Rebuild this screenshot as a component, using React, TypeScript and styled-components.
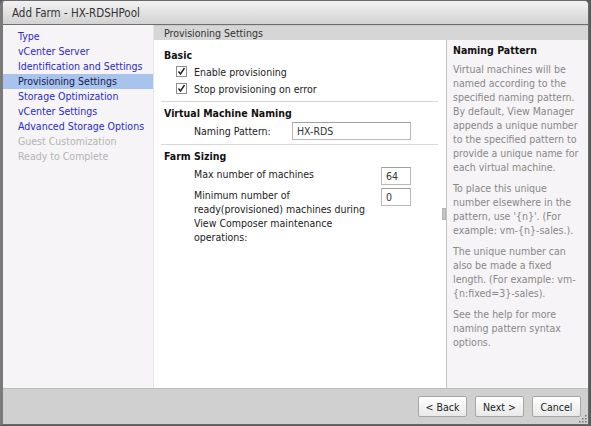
import React from "react";
import styled, { createGlobalStyle } from "styled-components";

const Global = createGlobalStyle`
  html, body { margin: 0; padding: 0; background: #5a5a5a; }
  body { font-family: "DejaVu Sans Condensed", "DejaVu Sans", sans-serif; font-size: 10.5px; }
  * { box-sizing: border-box; }
`;

const Window = styled.div`
  width: 589px;
  height: 425px;
  display: flex;
  flex-direction: column;
  background: #d0d0d0;
  border: 1px solid #6a6a6a;
  border-left: 3px solid #7a7a7a;
  border-radius: 5px 5px 0 0;
  overflow: hidden;
`;

const TitleBar = styled.div`
  height: 24px;
  flex: none;
  display: flex;
  align-items: center;
  padding-left: 9px;
  background: linear-gradient(#f2f2f2, #d2d2d2);
  border-bottom: 1px solid #6e6e6e;
  color: #333;
  font-size: 11.5px;
`;

const Body = styled.div`
  flex: 1;
  display: flex;
  min-height: 0;
`;

const Nav = styled.div`
  width: 151px;
  flex: none;
  background: #f6f4f6;
  padding-top: 4px;
  border-right: 1px solid #e6e6e6;
`;

const NavItem = styled.div<{ $state: "link" | "active" | "disabled" }>`
  height: 15px;
  line-height: 15px;
  padding-left: 15px;
  white-space: nowrap;
  color: ${(p) => (p.$state === "disabled" ? "#b4b4b4" : p.$state === "active" ? "#1a1a50" : "#2b2bc8")};
  background: ${(p) => (p.$state === "active" ? "#a8c3ec" : "transparent")};
`;

const Main = styled.div`
  flex: 1;
  display: flex;
  flex-direction: column;
  min-width: 0;
`;

const PanelHeader = styled.div`
  height: 15px;
  flex: none;
  line-height: 15px;
  padding-left: 10px;
  background: #d6d6d6;
  border-top: 1px solid #cacaca;
  color: #333;
`;

const PanelRow = styled.div`
  flex: 1;
  display: flex;
  min-height: 0;
`;

const Content = styled.div`
  width: 292px;
  flex: none;
  display: flex;
  background: #fff;
`;

const Scroll = styled.div`
  flex: 1;
  padding: 8px 4px 0 7px;
`;

const Track = styled.div`
  width: 4px;
  flex: none;
  padding-top: 168px;
`;

const Thumb = styled.div`
  width: 4px;
  height: 12px;
  background: #c4c4c4;
  border: 1px solid #b4b4b4;
`;

const Section = styled.div<{ $last?: boolean }>`
  border-bottom: ${(p) => (p.$last ? "none" : "1px solid #d8d8d8")};
  padding-bottom: ${(p) => (p.$last ? "0" : "4px")};
  margin-bottom: ${(p) => (p.$last ? "0" : "4px")};
`;

const SectionTitle = styled.div`
  height: 15px;
  line-height: 15px;
  padding-left: 3px;
  font-weight: bold;
  color: #111;
`;

const CheckRow = styled.label`
  height: 17px;
  display: flex;
  align-items: center;
  gap: 7px;
  padding-left: 15px;
  color: #222;
`;

const Box = styled.span`
  width: 11px;
  height: 11px;
  border: 1px solid #8c8c8c;
  background: #fff;
  display: inline-flex;
  align-items: center;
  justify-content: center;
`;

const FieldRow = styled.div<{ $label: number }>`
  display: grid;
  grid-template-columns: ${(p) => p.$label}px auto;
  align-items: start;
  padding-left: 33px;
  margin-top: ${(p) => (p.$label > 150 ? "3px" : "1px")};
  color: #222;
`;

const FieldLabel = styled.div<{ $top: number }>`
  line-height: 14px;
  padding-top: ${(p) => p.$top}px;
  padding-right: 10px;
`;

const Input = styled.div<{ $w: number }>`
  width: ${(p) => p.$w}px;
  height: 18px;
  border: 1px solid #b8b8b8;
  border-top-color: #a0a0a0;
  line-height: 16px;
  padding-left: 4px;
  background: #fff;
  color: #333;
`;

const Help = styled.div`
  flex: 1;
  background: #f6f4f6;
  border-left: 1px solid #c4c4c4;
  padding: 3px 4px 0 6px;
`;

const HelpTitle = styled.div`
  font-weight: bold;
  color: #111;
  line-height: 14px;
  margin-bottom: 5px;
`;

const HelpText = styled.p`
  margin: 0 0 7px;
  line-height: 14px;
  color: #888;
`;

const Footer = styled.div`
  height: 36px;
  flex: none;
  display: flex;
  align-items: center;
  justify-content: flex-end;
  gap: 8px;
  padding-right: 7px;
  background: #d0d0d0;
  border-top: 1px solid #bcbcbc;
  position: relative;
`;

const Button = styled.button`
  width: 49px;
  height: 21px;
  font-family: inherit;
  font-size: 10.5px;
  color: #222;
  background: linear-gradient(#ffffff, #e9e9e9);
  border: 1px solid #a6a6a6;
  border-radius: 2px;
  padding: 0;
`;

const Grip = styled.svg`
  position: absolute;
  right: 1px;
  bottom: 1px;
`;

const Check = () => (
  <Box>
    <svg width="9" height="9" viewBox="0 0 9 9">
      <path d="M1.5 4.5 L3.5 7 L7.5 1" fill="none" stroke="#222" strokeWidth="1.4" />
    </svg>
  </Box>
);

const help = [
  "Virtual machines will be named according to the specified naming pattern. By default, View Manager appends a unique number to the specified pattern to provide a unique name for each virtual machine.",
  "To place this unique number elsewhere in the pattern, use '{n}'. (For example: vm-{n}-sales.).",
  "The unique number can also be made a fixed length. (For example: vm-{n:fixed=3}-sales).",
  "See the help for more naming pattern syntax options.",
];

export default function App() {
  return (
    <>
      <Global />
      <Window>
        <TitleBar>Add Farm - HX-RDSHPool</TitleBar>
        <Body>
          <Nav>
            <NavItem $state="link">Type</NavItem>
            <NavItem $state="link">vCenter Server</NavItem>
            <NavItem $state="link">Identification and Settings</NavItem>
            <NavItem $state="active">Provisioning Settings</NavItem>
            <NavItem $state="link">Storage Optimization</NavItem>
            <NavItem $state="link">vCenter Settings</NavItem>
            <NavItem $state="link">Advanced Storage Options</NavItem>
            <NavItem $state="disabled">Guest Customization</NavItem>
            <NavItem $state="disabled">Ready to Complete</NavItem>
          </Nav>
          <Main>
            <PanelHeader>Provisioning Settings</PanelHeader>
            <PanelRow>
              <Content>
                <Scroll>
                  <Section>
                    <SectionTitle>Basic</SectionTitle>
                    <CheckRow>
                      <Check />
                      Enable provisioning
                    </CheckRow>
                    <CheckRow>
                      <Check />
                      Stop provisioning on error
                    </CheckRow>
                  </Section>
                  <Section>
                    <SectionTitle>Virtual Machine Naming</SectionTitle>
                    <FieldRow $label={98}>
                      <FieldLabel $top={2}>Naming Pattern:</FieldLabel>
                      <Input $w={119}>HX-RDS</Input>
                    </FieldRow>
                  </Section>
                  <Section $last>
                    <SectionTitle>Farm Sizing</SectionTitle>
                    <FieldRow $label={187}>
                      <FieldLabel $top={0}>Max number of machines</FieldLabel>
                      <Input $w={30}>64</Input>
                    </FieldRow>
                    <FieldRow $label={187}>
                      <FieldLabel $top={0}>
                        Minimum number of ready(provisioned) machines during View Composer maintenance
                        operations:
                      </FieldLabel>
                      <Input $w={30}>0</Input>
                    </FieldRow>
                  </Section>
                </Scroll>
                <Track>
                  <Thumb />
                </Track>
              </Content>
              <Help>
                <HelpTitle>Naming Pattern</HelpTitle>
                {help.map((t) => (
                  <HelpText key={t}>{t}</HelpText>
                ))}
              </Help>
            </PanelRow>
          </Main>
        </Body>
        <Footer>
          <Button>&lt; Back</Button>
          <Button>Next &gt;</Button>
          <Button>Cancel</Button>
          <Grip width="8" height="8" viewBox="0 0 8 8">
            <rect x="6" y="0" width="1.5" height="1.5" fill="#777" />
            <rect x="3" y="3" width="1.5" height="1.5" fill="#777" />
            <rect x="6" y="3" width="1.5" height="1.5" fill="#777" />
            <rect x="0" y="6" width="1.5" height="1.5" fill="#777" />
            <rect x="3" y="6" width="1.5" height="1.5" fill="#777" />
            <rect x="6" y="6" width="1.5" height="1.5" fill="#777" />
          </Grip>
        </Footer>
      </Window>
    </>
  );
}
